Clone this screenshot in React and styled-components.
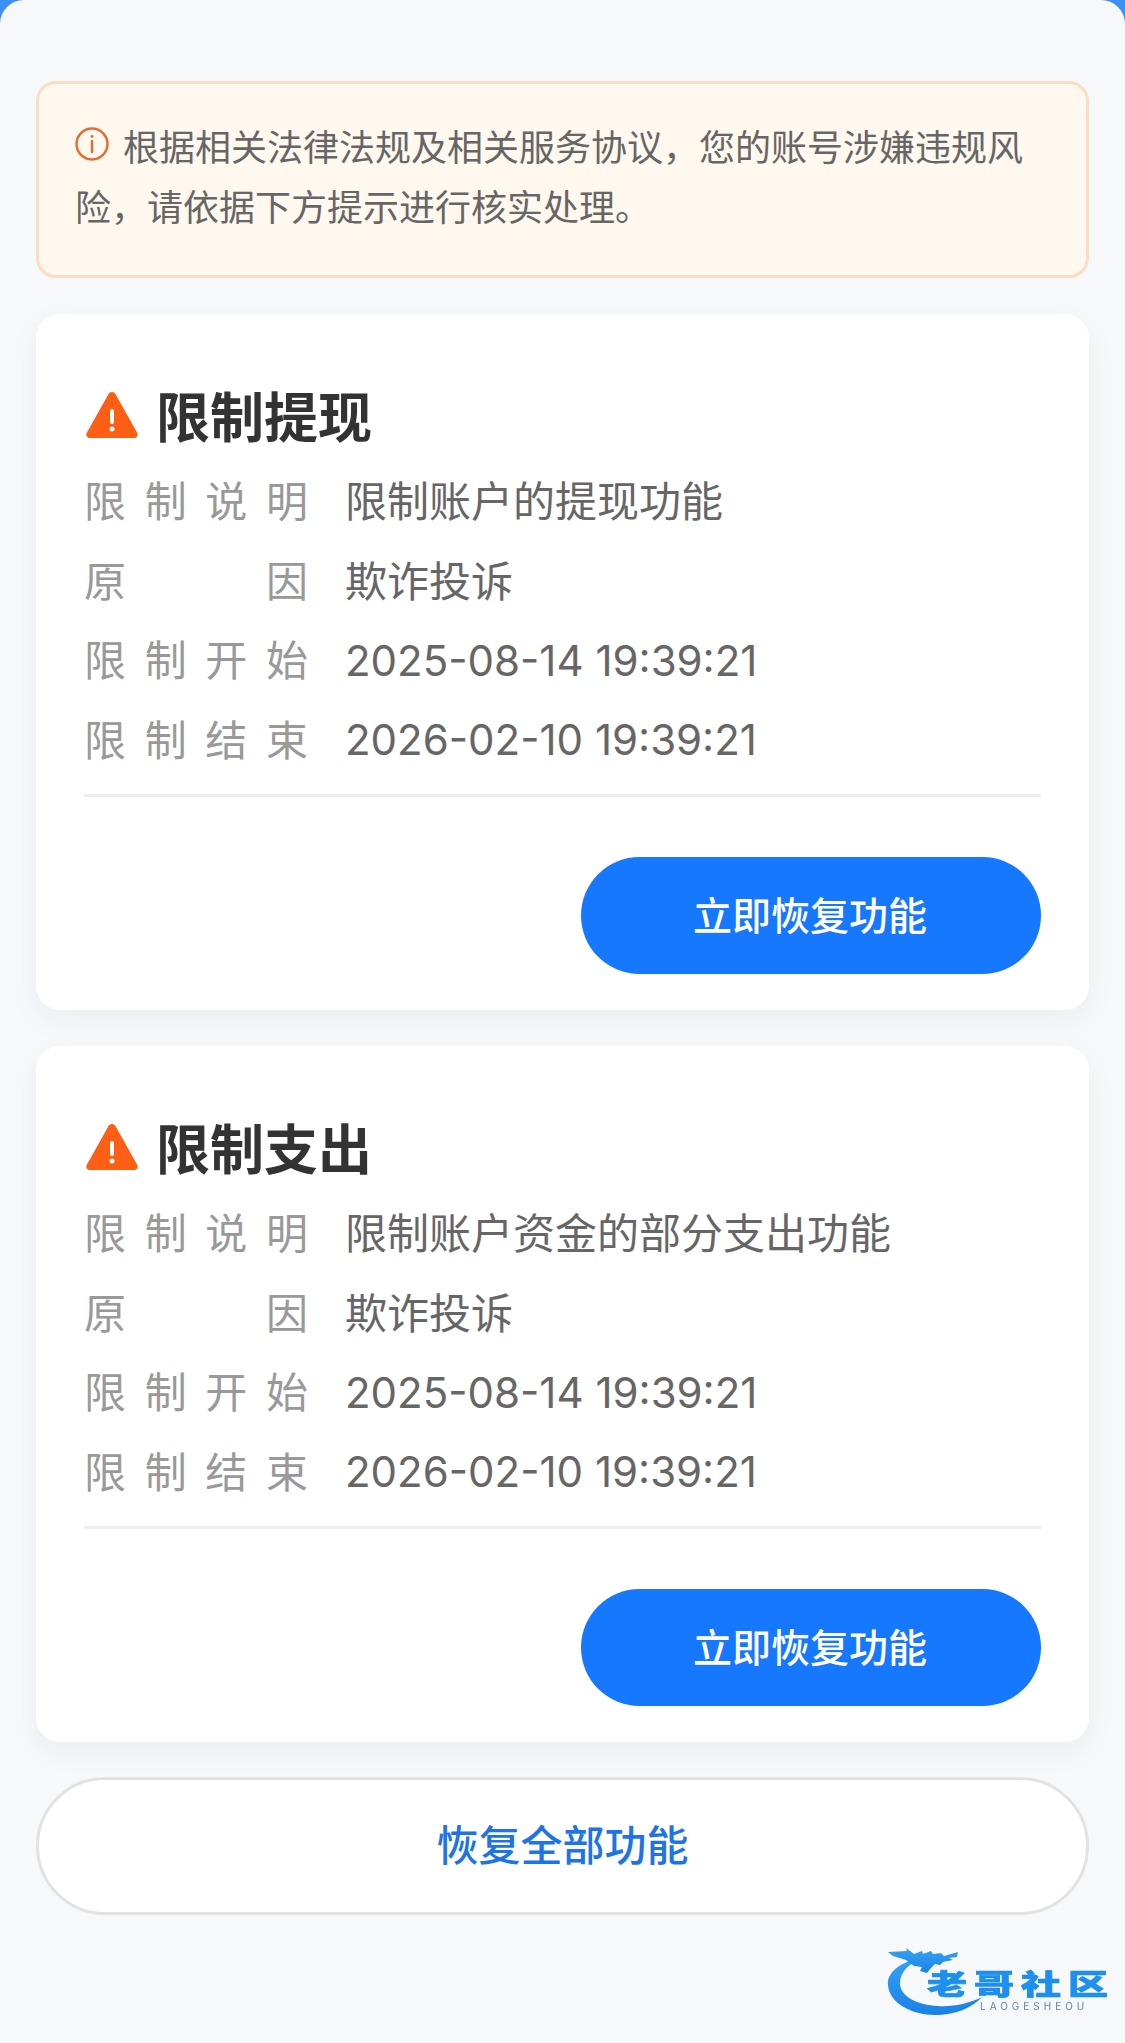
import React from "react";
import styled, { createGlobalStyle } from "styled-components";

const GlobalStyle = createGlobalStyle`
  html, body {
    margin: 0;
    padding: 0;
    background: #3d8ff5;
  }
  body {
    font-family: "Noto Sans CJK SC", "Inter", sans-serif;
  }
`;

const Page = styled.div`
  position: relative;
  box-sizing: border-box;
  width: 1125px;
  height: 2043px;
  padding: 81px 36px 0;
  overflow: hidden;
  background: #f7f8fa;
  border-radius: 24px 24px 0 0;
`;

const Notice = styled.div`
  box-sizing: border-box;
  height: 197px;
  padding: 31px 36px 0;
  background: #fff8ee;
  border: 3px solid #fbdcc4;
  border-radius: 20px;
  font-size: 36px;
  line-height: 60px;
  color: #666;
`;

const NoticeIcon = styled.svg`
  width: 34px;
  height: 34px;
  margin-right: 14px;
  vertical-align: 0;
`;

const Card = styled.section`
  box-sizing: border-box;
  height: 696px;
  margin-top: 36px;
  padding: 63px 48px 0;
  background: #fff;
  border-radius: 24px;
  box-shadow: 0 10px 30px rgba(30, 40, 60, 0.05);
`;

const Title = styled.h2`
  display: flex;
  align-items: center;
  gap: 18px;
  height: 74px;
  margin: 0 0 8px;
  padding-left: 2px;
  font-size: 54px;
  font-weight: 700;
  color: #333;
`;

const WarnMark = styled.svg`
  width: 52px;
  height: 46px;
  margin-top: 2px;
`;

const Row = styled.div`
  display: flex;
  align-items: center;
  height: 79.5px;
  font-size: 42px;
`;

const Label = styled.span`
  width: 224px;
  margin-right: 37px;
  text-align-last: justify;
  color: #999;
`;

const Value = styled.span`
  font-family: "Inter", "Noto Sans CJK SC", sans-serif;
  color: #666;
`;

const DateValue = styled(Value)`
  padding-top: 5px;
`;

const Divider = styled.div`
  height: 3px;
  margin-top: 17px;
  background: #eee;
`;

const Actions = styled.div`
  display: flex;
  justify-content: flex-end;
  margin-top: 60px;
`;

const RestoreButton = styled.button`
  width: 460px;
  height: 117px;
  padding: 0 2px 6px 0;
  border: 0;
  border-radius: 59px;
  background: #1677ff;
  color: #fff;
  font-family: inherit;
  font-size: 39px;
  font-weight: 500;
`;

const RestoreAll = styled.button`
  display: block;
  box-sizing: border-box;
  width: 100%;
  height: 138px;
  margin-top: 35px;
  padding: 0 0 7px;
  border: 3px solid #e2e2e2;
  border-radius: 69px;
  background: #fff;
  color: #1e74e6;
  font-family: inherit;
  font-size: 42px;
  font-weight: 500;
`;

const Logo = styled.div`
  position: absolute;
  right: 5px;
  bottom: 13px;
  width: 240px;
  height: 95px;
  filter: blur(0.6px);
`;

const LogoMark = styled.svg`
  display: block;
  width: 240px;
  height: 95px;
`;

const LogoName = styled.span`
  position: absolute;
  left: 47px;
  top: 28px;
  font-size: 40px;
  line-height: 40px;
  font-weight: 900;
  letter-spacing: 7px;
  color: #1d8fee;
  -webkit-text-stroke: 1px #1d8fee;
  white-space: nowrap;
  transform: scaleY(0.7);
`;

const LogoSub = styled.span`
  position: absolute;
  left: 100px;
  top: 66px;
  font-family: "Inter", sans-serif;
  font-size: 10px;
  line-height: 10px;
  letter-spacing: 4px;
  color: #5f86ad;
  white-space: nowrap;
`;

const InfoIcon = () => (
  <NoticeIcon viewBox="0 0 34 34" fill="none" stroke="#e8692f" strokeWidth="2.4">
    <circle cx="17" cy="17" r="15.5" />
    <path d="M17 14v11" strokeLinecap="round" />
    <circle cx="17" cy="9.5" r="1.4" fill="#e8692f" stroke="none" />
  </NoticeIcon>
);

const WarnIcon = () => (
  <WarnMark viewBox="0 0 52 46">
    <path
      d="M26 0c1.5 0 2.8.8 3.6 2.2l21.6 38.6c1.4 2.5-.2 5.2-3 5.2H3.8c-2.8 0-4.4-2.7-3-5.2L22.4 2.2C23.2.8 24.5 0 26 0z"
      fill="#ff5f14"
    />
    <rect x="24" y="17" width="4" height="15" rx="2" fill="#fff" />
    <circle cx="26" cy="37" r="2.5" fill="#fff" />
  </WarnMark>
);

const restrictions = [
  { title: "限制提现", desc: "限制账户的提现功能" },
  { title: "限制支出", desc: "限制账户资金的部分支出功能" },
];

const App = () => (
  <Page>
    <GlobalStyle />
    <Notice>
      <InfoIcon />
      根据相关法律法规及相关服务协议，您的账号涉嫌违规风险，请依据下方提示进行核实处理。
    </Notice>

    {restrictions.map((item) => (
      <Card key={item.title}>
        <Title>
          <WarnIcon />
          {item.title}
        </Title>
        <Row>
          <Label>限制说明</Label>
          <Value>{item.desc}</Value>
        </Row>
        <Row>
          <Label>原因</Label>
          <Value>欺诈投诉</Value>
        </Row>
        <Row>
          <Label>限制开始</Label>
          <DateValue>2025-08-14 19:39:21</DateValue>
        </Row>
        <Row>
          <Label>限制结束</Label>
          <DateValue>2026-02-10 19:39:21</DateValue>
        </Row>
        <Divider />
        <Actions>
          <RestoreButton>立即恢复功能</RestoreButton>
        </Actions>
      </Card>
    ))}

    <RestoreAll>恢复全部功能</RestoreAll>

    <Logo>
      <LogoMark viewBox="0 0 240 95">
        <defs>
          <linearGradient id="swoosh" x1="0" y1="0" x2="0" y2="1">
            <stop offset="0" stopColor="#35a4f2" />
            <stop offset="1" stopColor="#1a80e8" />
          </linearGradient>
        </defs>
        <path
          d="M42 22C18 28 7 38 8 50c1 18 24 30 47 30 20 0 37-7 47-18-14 7-30 10-44 9-20-1-38-9-38-23 0-10 8-19 22-25z"
          fill="url(#swoosh)"
        />
        <path
          d="M8 17l19-1-1-3 8 6 8-3 1 3 8-3 2 3 8-1 3 3 14-4-1 5-8 1 4 2-10 2-3 3-5-1-5 5-3 4-7-2 2-4-8-1-8-6-13-4z"
          fill="url(#swoosh)"
        />
      </LogoMark>
      <LogoName>老哥社区</LogoName>
      <LogoSub>LAOGESHEOU</LogoSub>
    </Logo>
  </Page>
);

export default App;
